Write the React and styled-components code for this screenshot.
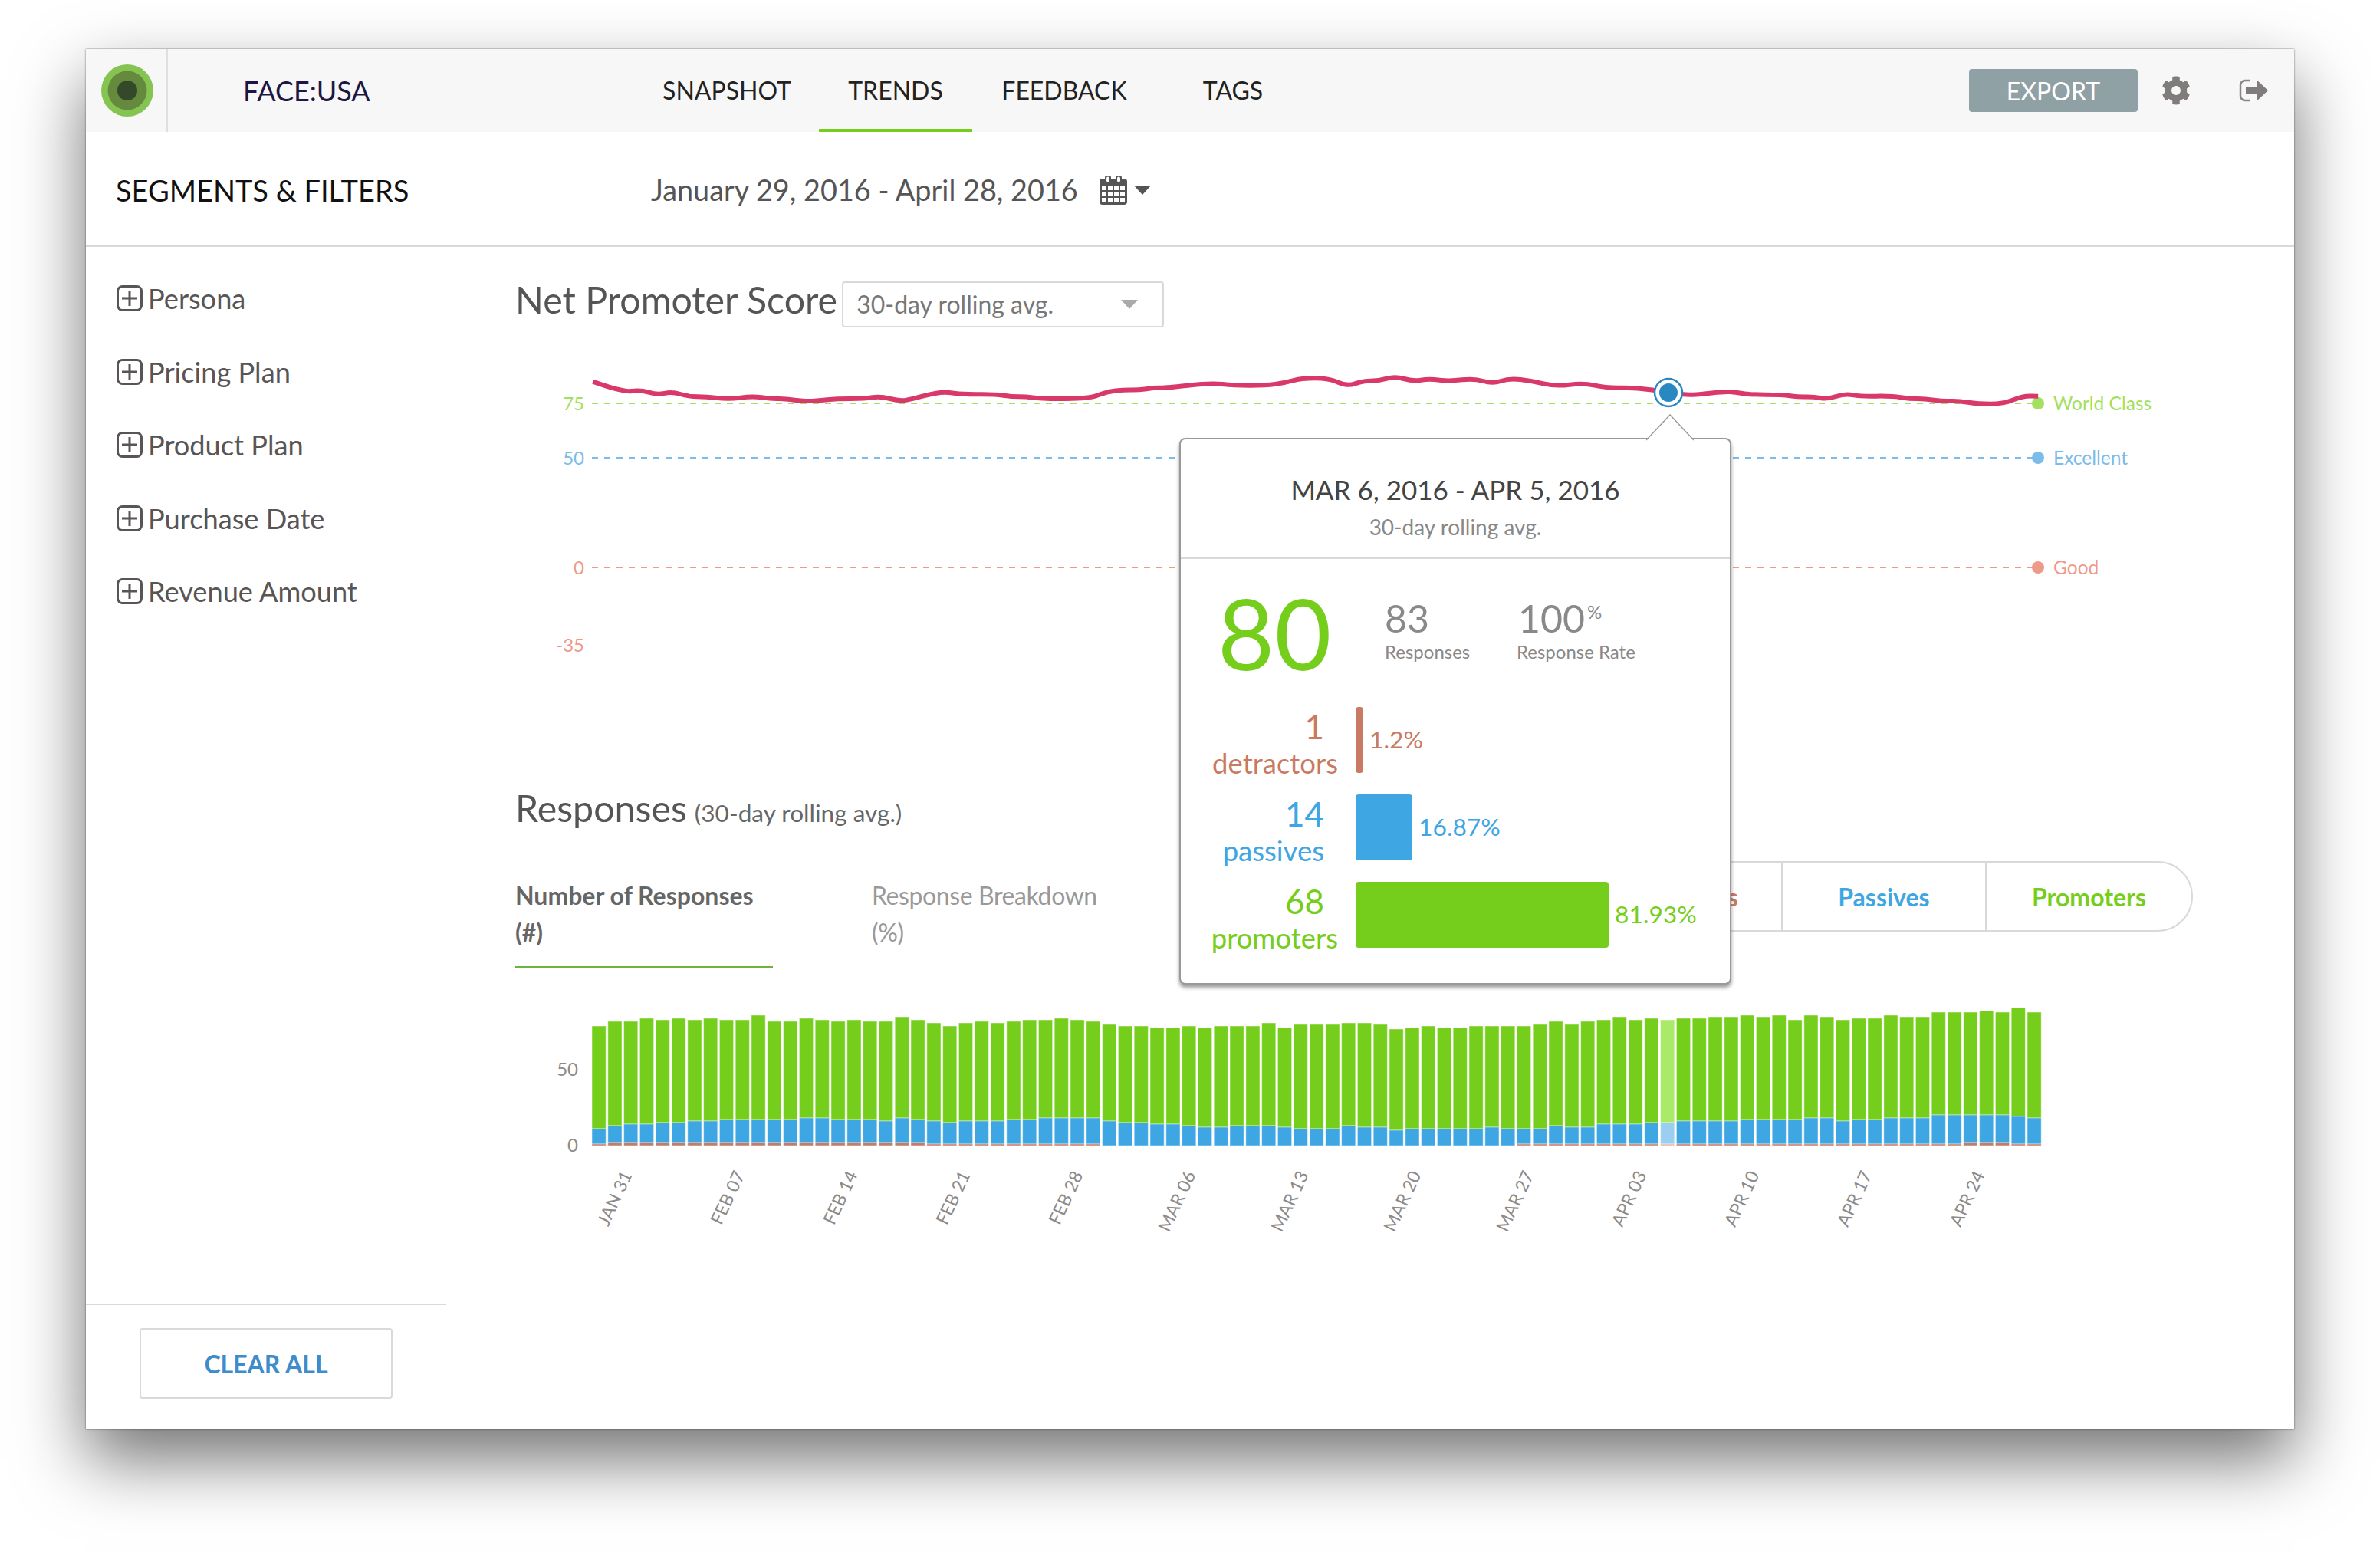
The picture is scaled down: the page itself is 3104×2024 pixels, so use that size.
import React from "react";
import styled, { createGlobalStyle } from "styled-components";
import { FaCog } from "react-icons/fa";

const GREEN = "#76ce1c";
const BLUE = "#3fa6e4";
const RED = "#c97a62";
const FONT = `Lato, "Noto Sans", sans-serif`;

const Global = createGlobalStyle`
  html, body { margin: 0; padding: 0; background: #fff; font-family: ${FONT}; }
  #root { width: 3104px; height: 2024px; overflow: hidden; }
`;

const Page = styled.div`
  width: 3104px;
  height: 2024px;
  padding: 64px 0 0 112px;
  box-sizing: border-box;
`;
const Win = styled.div`
  position: relative;
  width: 2880px;
  height: 1800px;
  background: #fff;
  display: flex;
  flex-direction: column;
  box-shadow: 0 0 2px rgba(0, 0, 0, 0.55), 0 40px 84px rgba(0, 0, 0, 0.55);
`;

const Header = styled.header`
  height: 108px;
  flex: none;
  background: #f7f7f7;
  display: flex;
  align-items: stretch;
`;
const LogoCell = styled.div`
  width: 107px;
  box-sizing: border-box;
  border-right: 2px solid #dfdfdf;
  display: flex;
  align-items: center;
  padding-left: 20px;
`;
const Brand = styled.div`
  width: 531px;
  padding-left: 98px;
  display: flex;
  align-items: center;
  font-size: 36px;
  color: #1d1745;
`;
const Nav = styled.nav`
  display: flex;
  gap: 20px;
`;
const NavItem = styled.a`
  width: 200px;
  box-sizing: border-box;
  display: flex;
  align-items: center;
  justify-content: center;
  font-size: 32px;
  color: #222;
  border-bottom: 4px solid ${(p) => (p.$active ? GREEN : "transparent")};
  padding-top: 3px;
`;
const Actions = styled.div`
  margin-left: auto;
  display: flex;
  align-items: center;
  padding-right: 34px;
  color: #807c7c;
`;
const ExportBtn = styled.button`
  width: 220px;
  height: 56px;
  border: 0;
  border-radius: 4px;
  background: #90a1a5;
  color: #fff;
  font: 400 32px ${FONT};
  margin-right: 31px;
  padding: 0;
`;
const GearIcon = styled(FaCog)`
  width: 38px;
  height: 38px;
  margin-right: 63px;
`;

const Toolbar = styled.div`
  height: 150px;
  flex: none;
  box-sizing: border-box;
  border-bottom: 2px solid #dcd8da;
  padding-top: 3px;
  display: flex;
  align-items: center;
`;
const ToolbarTitle = styled.h2`
  margin: 0;
  width: 698px;
  padding-left: 39px;
  font-weight: 400;
  font-size: 38px;
  color: #111;
`;
const DateRange = styled.div`
  font-size: 37.8px;
  font-weight: 400;
  color: #555;
`;
const CalButton = styled.div`
  margin-left: 28px;
  display: flex;
  align-items: center;
  gap: 9px;
  color: #555;
`;
const Caret = styled.span`
  width: 0;
  height: 0;
  border-left: 11px solid transparent;
  border-right: 11px solid transparent;
  border-top: 12px solid ${(p) => p.$color || "#555"};
`;

const Body = styled.div`
  flex: 1;
  display: grid;
  grid-template-columns: 470px 1fr;
  min-height: 0;
`;
const Sidebar = styled.aside`
  display: flex;
  flex-direction: column;
`;
const FilterList = styled.ul`
  list-style: none;
  margin: 0;
  padding: 43px 0 0 40px;
  display: flex;
  flex-direction: column;
  gap: 47.5px;
`;
const FilterItem = styled.li`
  height: 48px;
  display: flex;
  align-items: center;
  gap: 7px;
  font-size: 36.2px;
  color: #595555;
`;
const SidebarFoot = styled.div`
  margin-top: auto;
  height: 164px;
  box-sizing: border-box;
  border-top: 2px solid #dcd8da;
  padding: 30px 0 0 70px;
`;
const ClearBtn = styled.button`
  width: 330px;
  height: 92px;
  background: #fff;
  border: 2px solid #dcd8da;
  border-radius: 4px;
  color: #3f8ccb;
  font: 700 32px ${FONT};
  padding: 0;
`;

const Main = styled.main`
  display: flex;
  flex-direction: column;
  min-width: 0;
`;
const TitleRow = styled.div`
  margin-top: 44px;
  height: 61px;
  padding-left: 90px;
  display: flex;
  align-items: center;
  gap: 6px;
`;
const Title = styled.h1`
  margin: 0;
  padding-bottom: ${(p) => p.$lift || 0}px;
  font-size: 48.3px;
  font-weight: 400;
  color: #555;
`;
const Select = styled.div`
  width: 420px;
  height: 60px;
  box-sizing: border-box;
  border: 2px solid #dcd8da;
  border-radius: 4px;
  padding: 0 32px 0 17px;
  display: flex;
  align-items: center;
  justify-content: space-between;
  font-size: 32px;
  color: #777;
`;
const ChartSvg = styled.svg`
  display: block;
  flex: none;
`;
const Axis = styled.text`
  font-family: ${FONT};
  font-size: ${(p) => p.$size || 24}px;
  fill: ${(p) => p.$fill};
`;
const DateTick = styled.text`
  font-family: ${FONT};
  font-size: 23px;
  fill: #8c8a8a;
`;
const RespHead = styled.div`
  height: 70px;
  padding-left: 90px;
  display: flex;
  align-items: center;
  gap: 10px;
`;
const RespSub = styled.span`
  font-size: 31.6px;
  color: #666;
  padding-top: 10px;
`;
const TabsRow = styled.div`
  margin-top: 33px;
  height: 140px;
  padding: 0 132px 0 90px;
  display: flex;
  align-items: flex-start;
`;
const Tab = styled.div`
  width: 336px;
  margin-right: 129px;
  padding: 21px 0 20px;
  font-size: 32px;
  line-height: 48px;
  letter-spacing: ${(p) => (p.$active ? 0 : -0.4)}px;
  font-weight: ${(p) => (p.$active ? 700 : 400)};
  color: ${(p) => (p.$active ? "#666" : "#999")};
  border-bottom: 3px solid ${(p) => (p.$active ? "#6cb33f" : "transparent")};
`;
const Segments = styled.div`
  margin-left: auto;
  height: 92px;
  box-sizing: border-box;
  border: 2px solid #dcd8da;
  border-radius: 46px;
  display: flex;
`;
const Segment = styled.div`
  width: ${(p) => p.$w}px;
  box-sizing: border-box;
  display: flex;
  align-items: center;
  justify-content: center;
  font-size: 32px;
  font-weight: 700;
  color: ${(p) => p.$color};
  & + & { border-left: 2px solid #dcd8da; }
`;

const Tip = styled.div`
  position: absolute;
  left: 1426px;
  top: 507px;
  width: 720px;
  height: 713px;
  box-sizing: border-box;
  background: #fff;
  border: 2px solid #999;
  border-radius: 8px;
  box-shadow: 0 4px 5px rgba(0, 0, 0, 0.4);
`;
const TipArrow = styled.svg`
  position: absolute;
  left: 607px;
  top: -33px;
`;
const TipHead = styled.div`
  height: 156px;
  box-sizing: border-box;
  border-bottom: 2px solid #dcd8da;
  display: flex;
  flex-direction: column;
  align-items: center;
  padding-top: 41px;
`;
const TipDate = styled.div`
  font-size: 35px;
  line-height: 49px;
  color: #444;
`;
const TipSub = styled.div`
  font-size: 28px;
  line-height: 49px;
  color: #888;
`;
const Stats = styled.div`
  height: 193px;
  box-sizing: border-box;
  padding: 32px 0 0 48px;
  display: grid;
  grid-template-columns: 218px 172px 1fr;
`;
const BigScore = styled.div`
  font-size: 128px;
  line-height: 128px;
  color: ${GREEN};
`;
const StatCol = styled.div`
  display: flex;
  flex-direction: column;
  padding-top: 16px;
  color: #8a8888;
`;
const StatNum = styled.div`
  font-size: 50px;
  line-height: 58px;
  padding-left: ${(p) => p.$indent || 0}px;
`;
const Sup = styled.sup`
  font-size: 24px;
  line-height: 0;
  vertical-align: 18px;
  margin-left: 3px;
`;
const StatLabel = styled.div`
  font-size: 24px;
  line-height: 30px;
`;
const Rows = styled.div`
  display: flex;
  flex-direction: column;
  gap: 28px;
`;
const Row = styled.div`
  height: 86px;
  display: flex;
  color: ${(p) => p.$color};
`;
const RowLabel = styled.div`
  width: 187px;
  margin-right: 41px;
  flex: none;
  text-align: right;
  padding-top: 1px;
`;
const RowCount = styled.div`
  font-size: 44px;
  line-height: 48px;
`;
const RowName = styled.div`
  font-size: 36.5px;
  line-height: 48px;
  white-space: nowrap;
  margin-right: ${(p) => (p.$over ? -18 : 0)}px;
`;
const Bar = styled.div`
  height: 86px;
  flex: none;
  border-radius: 4px;
  background: ${(p) => p.$color};
`;
const RowPct = styled.div`
  align-self: center;
  margin-left: 8px;
  padding-bottom: 2px;
  font-size: 31.8px;
`;

/* ---- data traced from the reference ---- */
const tops = [78,81,81,83,82,83,82,83,82,82,85,81,81,83,82,81,82,81,81,84,82,80,78,80,81,
  80,81,82,82,83,82,81,79,78,78,77,77,78,77,78,78,78,80,77,79,79,79,80,80,79,76,77,78,77,77,78,78,78,78,79,81,79,81,82,84,
  82,83,82,83,83,84,84,85,84,85,82,85,84,82,83,83,85,84,84,87,87,87,88,87,90,87];
const blues = [11,13,14,14,15,15,16,16,17,17,17,17,17,18,18,17,17,17,16,18,17,16,15,16,16,
  16,17,17,18,18,18,18,16,15,15,14,14,13,12,12,13,13,13,12,11,11,11,13,12,12,10,11,11,11,11,11,12,11,11,11,13,12,12,14,14,
  14,15,15,16,16,16,16,17,17,17,17,18,18,16,17,17,18,18,18,20,20,20,20,20,19,18];
const redAt = (i) => {
  if (i === 0) return 1;
  if (i <= 20) return 2;
  if (i <= 31) return 1;
  if (i <= 57) return 0;
  if (i >= 86 && i <= 88) return 2;
  return 1;
};
const BASE = 1494;
const PITCH = 20.8;
const HIGHLIGHT = 67;

const traced = (pts, x0, fx, y0) => pts.map(([x, y]) => [x0 + x / fx, y0 + y / 3]);
const linePts = [
  ...traced([[232,113],[300,155],[340,145],[378,165],[412,152],[450,172],[490,172],[540,182],[595,170],[635,180],[665,180],[715,190],[745,188],[785,180],[850,180],[885,170],[930,190],[960,180],[995,163],[1030,153],[1075,163],[1145,162],[1185,172],[1215,172],[1255,180],[1360,180],[1400,152],[1440,145],[1470,146],[1510,137]], 640, 1.742, 460),
  ...traced([[0,78],[120,58],[185,68],[270,68],[320,58],[365,40],[440,40],[490,72],[530,50],[575,50],[618,32],[665,52],[710,42],[765,52],[830,40],[880,62],[925,40],[985,50],[1050,72],[1125,58],[1185,78],[1265,76],[1354,95]], 1520, 2.063, 480),
  ...traced([[190,135],[230,133],[290,122],[320,124],[355,134],[440,134],[480,143],[520,142],[555,152],[600,130],[640,141],[720,139],[765,150],[805,150],[850,160],[890,158],[940,170],[1005,170],[1055,139],[1094,140]], 2100, 1.96, 470),
];
const smooth = (pts) => {
  let d = `M${pts[0][0]} ${pts[0][1]}`;
  for (let i = 1; i < pts.length - 1; i++) {
    const mx = (pts[i][0] + pts[i + 1][0]) / 2;
    const my = (pts[i][1] + pts[i + 1][1]) / 2;
    d += ` Q${pts[i][0]} ${pts[i][1]} ${mx} ${my}`;
  }
  const l = pts[pts.length - 1];
  return d + ` L${l[0]} ${l[1]}`;
};

const grid = [
  { y: 526, label: "75", name: "World Class", c: "#a3e060" },
  { y: 597, label: "50", name: "Excellent", c: "#7bbce8" },
  { y: 740, label: "0", name: "Good", c: "#ee9a88" },
];
const ticks = ["JAN 31","FEB 07","FEB 14","FEB 21","FEB 28","MAR 06","MAR 13","MAR 20","MAR 27","APR 03","APR 10","APR 17","APR 24"];

function LineChart() {
  return (
    <ChartSvg width="2410" height="593" viewBox="582 427 2410 593">
      {grid.map((g) => (
        <g key={g.label}>
          <Axis $fill={g.c} x="762" y={g.y + 9} textAnchor="end">{g.label}</Axis>
          <line x1="772" x2="2658" y1={g.y} y2={g.y} stroke={g.c} strokeWidth="2" strokeDasharray="8 8" />
          <circle cx="2658" cy={g.y} r="8" fill={g.c} />
          <Axis $fill={g.c} $size={24.5} x="2678" y={g.y + 9}>{g.name}</Axis>
        </g>
      ))}
      <Axis $fill="#ee9a88" x="762" y="850" textAnchor="end">-35</Axis>
      <path d={smooth(linePts)} fill="none" stroke="#d9386a" strokeWidth="6" />
      <circle cx="2176" cy="512" r="18" fill="#fff" stroke="#2a88c0" strokeWidth="2.5" />
      <circle cx="2176" cy="512" r="12" fill="#2a88c0" />
    </ChartSvg>
  );
}

function BarChart() {
  return (
    <ChartSvg width="2410" height="330" viewBox="582 1300 2410 330">
      <Axis $fill="#8c8a8a" x="754" y="1403" textAnchor="end">50</Axis>
      <Axis $fill="#8c8a8a" x="754" y="1502" textAnchor="end">0</Axis>
      {tops.map((t, i) => {
        const x = 772 + i * PITCH;
        const r = redAt(i);
        const b = blues[i];
        const hi = i === HIGHLIGHT;
        return (
          <g key={i} stroke="#fff" strokeOpacity="0.45" strokeWidth="1">
            <rect x={x} y={BASE - t * 2} width="18.2" height={(t - b) * 2} fill={hi ? "#a9ea68" : GREEN} />
            <rect x={x} y={BASE - b * 2} width="18.2" height={(b - r) * 2} fill={hi ? "#9bcff2" : BLUE} />
            {r > 0 && <rect x={x} y={BASE - r * 2} width="18.2" height={r * 2} fill={hi ? "#e6b8aa" : RED} />}
          </g>
        );
      })}
      {ticks.map((t, i) => {
        const x = 825 + i * 147;
        return (
          <DateTick key={t} x={x} y="1532" textAnchor="end" transform={`rotate(-65 ${x} 1532)`}>{t}</DateTick>
        );
      })}
    </ChartSvg>
  );
}

const Logo = () => (
  <svg width="68" height="68" viewBox="0 0 68 68">
    <circle cx="34" cy="34" r="34" fill="#86c452" />
    <circle cx="34" cy="34" r="25.5" fill="#65893d" />
    <circle cx="34" cy="34" r="13" fill="#33492a" />
  </svg>
);
const Exit = () => (
  <svg width="38" height="30" viewBox="0 0 38 30">
    <path d="M15 2H8A6 6 0 0 0 2 8V22A6 6 0 0 0 8 28H15" fill="none" stroke="#8a8686" strokeWidth="2.5" />
    <path d="M9 10H23V1L38 15 23 29V20H9Z" fill="#807c7c" />
  </svg>
);
const Calendar = () => (
  <svg width="36" height="38" viewBox="0 0 36 38">
    <path fillRule="evenodd" fill="#555" d="M4 4H7V3a4 4 0 0 1 8 0V4H21V3a4 4 0 0 1 8 0V4H32a4 4 0 0 1 4 4V34a4 4 0 0 1-4 4H4a4 4 0 0 1-4-4V8a4 4 0 0 1 4-4ZM3 13V19H9V13ZM11 13V19H17V13ZM19 13V19H25V13ZM27 13V19H33V13ZM3 21V27H9V21ZM11 21V27H17V21ZM19 21V27H25V21ZM27 21V27H33V21ZM3 29V35H9V29ZM11 29V35H17V29ZM19 29V35H25V29ZM27 29V35H33V29Z" />
    <rect x="9" y="1.5" width="4" height="7" rx="2" fill="#fff" />
    <rect x="23" y="1.5" width="4" height="7" rx="2" fill="#fff" />
  </svg>
);
const PlusBox = () => (
  <svg width="34" height="34" viewBox="0 0 34 34">
    <rect x="1.5" y="1.5" width="31" height="31" rx="6" fill="none" stroke="#595555" strokeWidth="3" />
    <path d="M17 7V27M7 17H27" stroke="#595555" strokeWidth="3" />
  </svg>
);

const filters = ["Persona", "Pricing Plan", "Product Plan", "Purchase Date", "Revenue Amount"];
const rows = [
  { n: "1", name: "detractors", c: RED, w: 10, pct: "1.2%", over: true },
  { n: "14", name: "passives", c: BLUE, w: 74, pct: "16.87%" },
  { n: "68", name: "promoters", c: GREEN, w: 330, pct: "81.93%", over: true },
];

const ChartGap = styled.div`
  height: 37px;
  flex: none;
`;

export default function App() {
  return (
    <Page>
      <Global />
      <Win>
        <Header>
          <LogoCell><Logo /></LogoCell>
          <Brand>FACE:USA</Brand>
          <Nav>
            <NavItem>SNAPSHOT</NavItem>
            <NavItem $active>TRENDS</NavItem>
            <NavItem>FEEDBACK</NavItem>
            <NavItem>TAGS</NavItem>
          </Nav>
          <Actions>
            <ExportBtn>EXPORT</ExportBtn>
            <GearIcon />
            <Exit />
          </Actions>
        </Header>
        <Toolbar>
          <ToolbarTitle>SEGMENTS &amp; FILTERS</ToolbarTitle>
          <DateRange>January 29, 2016 - April 28, 2016</DateRange>
          <CalButton><Calendar /><Caret /></CalButton>
        </Toolbar>
        <Body>
          <Sidebar>
            <FilterList>
              {filters.map((f) => (
                <FilterItem key={f}><PlusBox />{f}</FilterItem>
              ))}
            </FilterList>
            <SidebarFoot><ClearBtn>CLEAR ALL</ClearBtn></SidebarFoot>
          </Sidebar>
          <Main>
            <TitleRow>
              <Title $lift={14}>Net Promoter Score</Title>
              <Select>30-day rolling avg.<Caret $color="#aaa" /></Select>
            </TitleRow>
            <LineChart />
            <RespHead>
              <Title $lift={4}>Responses</Title>
              <RespSub>(30-day rolling avg.)</RespSub>
            </RespHead>
            <TabsRow>
              <Tab $active>Number of Responses<br />(#)</Tab>
              <Tab>Response Breakdown<br />(%)</Tab>
              <Segments>
                <Segment $w={265} $color={RED}>Detractors</Segment>
                <Segment $w={266} $color={BLUE}>Passives</Segment>
                <Segment $w={269} $color={GREEN}>Promoters</Segment>
              </Segments>
            </TabsRow>
            <ChartGap />
            <BarChart />
          </Main>
        </Body>
        <Tip>
          <TipArrow width="62" height="35" viewBox="0 0 62 35">
            <path d="M0 34L31 1 62 34" fill="#fff" stroke="#999" strokeWidth="1.5" />
            <rect x="2" y="32" width="58" height="3" fill="#fff" />
          </TipArrow>
          <TipHead>
            <TipDate>MAR 6, 2016 - APR 5, 2016</TipDate>
            <TipSub>30-day rolling avg.</TipSub>
          </TipHead>
          <Stats>
            <BigScore>80</BigScore>
            <StatCol>
              <StatNum>83</StatNum>
              <StatLabel>Responses</StatLabel>
            </StatCol>
            <StatCol>
              <StatNum $indent={2}>100<Sup>%</Sup></StatNum>
              <StatLabel>Response Rate</StatLabel>
            </StatCol>
          </Stats>
          <Rows>
            {rows.map((r) => (
              <Row key={r.name} $color={r.c}>
                <RowLabel>
                  <RowCount>{r.n}</RowCount>
                  <RowName $over={r.over}>{r.name}</RowName>
                </RowLabel>
                <Bar $color={r.c} style={{ width: r.w }} />
                <RowPct>{r.pct}</RowPct>
              </Row>
            ))}
          </Rows>
        </Tip>
      </Win>
    </Page>
  );
}
